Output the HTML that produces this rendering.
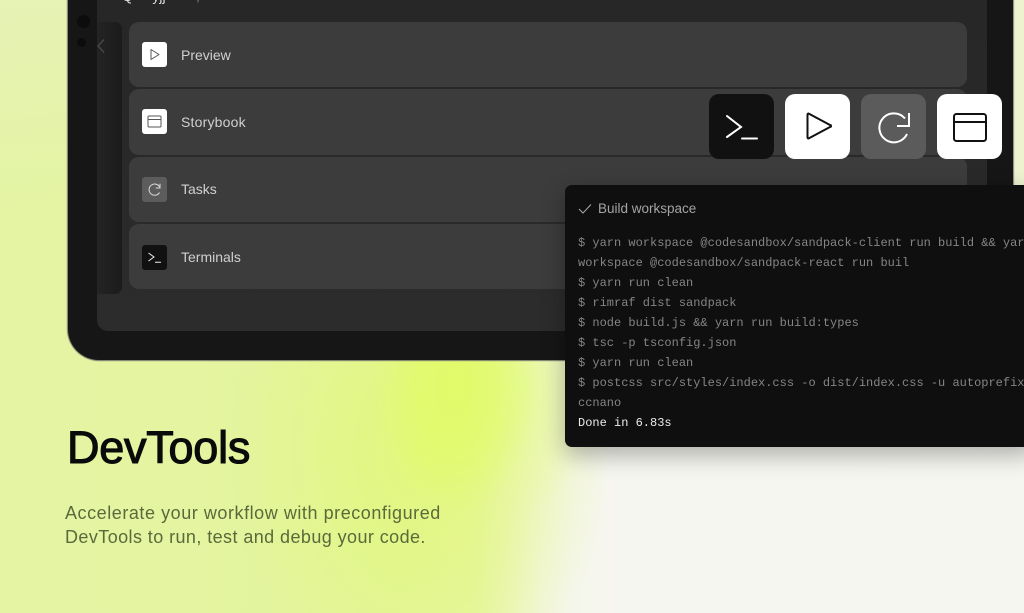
<!DOCTYPE html>
<html><head><meta charset="utf-8">
<style>
*{box-sizing:border-box;margin:0;padding:0}
html,body{width:1024px;height:613px;overflow:hidden}
body{position:relative;font-family:"Liberation Sans",sans-serif;background:#f5f6ee}
.abs{position:absolute}
#bg{left:0;top:0;width:1024px;height:613px;overflow:hidden;background:
radial-gradient(ellipse 80px 130px at 455px 385px,rgba(225,251,105,1) 0%,rgba(225,251,105,.7) 50%,rgba(225,251,105,0) 100%),
radial-gradient(ellipse 190px 260px at 420px 450px,rgba(226,248,120,.85) 0%,rgba(226,248,120,0) 100%),
radial-gradient(ellipse 65px 130px at 525px 385px,rgba(232,250,165,.9) 0%,rgba(232,250,165,0) 100%),
linear-gradient(180deg,rgba(232,241,190,.65) 0%,rgba(232,241,190,0) 35%),
linear-gradient(90deg,#e4f4a3 0,#e3f49c 400px,#e5f5a2 475px,#edf5bf 510px,#f2f5dc 540px,#f5f6ea 570px,#f6f6f0 620px,#f6f6f1 1024px)}
#bg3{left:1012px;top:0;width:12px;height:190px;background:#eef2cf}
#device{left:68px;top:-40px;width:945px;height:400px;background:#161616;border-radius:0 0 31px 31px;box-shadow:0 1px 1px #77776e,-1px 0 1px #77776e,1px 0 1px #8a8a80}
#screen{left:97px;top:-40px;width:890px;height:371px;background:linear-gradient(180deg,#262626,#2c2c2c);border-radius:0 0 11px 11px}
#side{left:97px;top:22px;width:25px;height:272px;background:linear-gradient(90deg,#242424,#1b1b1b);border-radius:0 7px 7px 0}
.row{position:absolute;left:129px;width:838px;height:65px;background:#3c3c3c;border-radius:10px}
.ic{position:absolute;left:142px;width:25px;height:25px;border-radius:3px;display:flex;align-items:center;justify-content:center}
.lb{position:absolute;left:181px;font-size:14px;line-height:18px;color:#d0d0d0}
.big{position:absolute;top:94px;width:65px;height:65px;border-radius:10px}
.big svg,.ic svg{display:block}
#term{left:565px;top:185px;width:470px;height:262px;background:#0f0f10;border-radius:7px;box-shadow:0 8px 24px rgba(0,0,0,.3)}
#term .h{position:absolute;left:33px;top:15px;font-size:13.5px;line-height:18px;color:#a4a4a4}
#term pre{position:absolute;left:13px;top:48px;font-family:"Liberation Mono",monospace;font-size:12px;line-height:20px;color:#858585;white-space:pre}
#term b{font-weight:400;color:#ececec}
h1{position:absolute;left:67px;top:422px;font-size:45px;line-height:52px;font-weight:400;color:#0a0a0a;letter-spacing:-.25px;-webkit-text-stroke:1.1px #0a0a0a;white-space:nowrap}
p{position:absolute;left:65px;top:501px;font-size:18px;line-height:24px;color:#5a6a3a;white-space:nowrap}
</style></head>
<body>
<div class="abs" id="bg"></div>
<div class="abs" id="bg3"></div>
<div class="abs" id="device"></div>
<div class="abs" id="screen"></div>
<div class="abs" style="left:122px;top:-12px;font-size:14px;line-height:16px;color:#ddd;white-space:pre;overflow:hidden">Q     yjj</div>
<div class="abs" style="left:196px;top:-12px;font-size:14px;line-height:16px;color:#777;white-space:pre">,</div>
<div class="abs" style="left:77px;top:15px;width:13px;height:13px;border-radius:50%;background:#0c0c0c"></div>
<div class="abs" style="left:77px;top:38px;width:9px;height:9px;border-radius:50%;background:#0c0c0c"></div>
<div class="abs" id="side"></div>
<svg class="abs" style="left:95px;top:38px" width="12" height="16" viewBox="0 0 12 16" fill="none" stroke="#4a4a4a" stroke-width="1.3"><path d="M9 1.500 3 8l6 6.500"/></svg>

<div class="row" style="top:22px"></div>
<div class="row" style="top:89px;height:66px"></div>
<div class="row" style="top:157px"></div>
<div class="row" style="top:224px"></div>

<div class="ic" style="top:42px;background:#fff"><svg width="15" height="15" viewBox="0 0 15 15" fill="none" stroke="#555" stroke-width="1"><path d="M4 2.500v10l8-5z" stroke-linejoin="round"/></svg></div>
<div class="lb" style="top:46px">Preview</div>
<div class="ic" style="top:109px;background:#fff"><svg width="15" height="15" viewBox="0 0 15 15" fill="none" stroke="#555" stroke-width="1"><rect x="1" y="2" width="13" height="11" rx="1"/><path d="M1 5.500h13"/></svg></div>
<div class="lb" style="top:113px;letter-spacing:.2px">Storybook</div>
<div class="ic" style="top:177px;background:#5c5c5c"><svg width="15" height="15" viewBox="0 0 15 15" fill="none" stroke="#ddd" stroke-width="1"><path d="M12.500 10.500A5.600 5.600 0 1 1 12.600 5M13 1.800V6H8.800"/></svg></div>
<div class="lb" style="top:180px">Tasks</div>
<div class="ic" style="top:245px;background:#111"><svg width="15" height="15" viewBox="0 0 15 15" fill="none" stroke="#eee" stroke-width="1"><path d="M1.500 3 7 7 1.500 11M8 12.200h6"/></svg></div>
<div class="lb" style="top:248px">Terminals</div>

<div class="big" style="left:709px;background:#111"><svg width="65" height="65" viewBox="0 0 65 65" fill="none" stroke="#fff" stroke-width="2" stroke-linecap="round"><path d="M18 22 32 33 18 43M33 44.500h15"/></svg></div>
<div class="big" style="left:785px;background:#fff"><svg width="65" height="65" viewBox="0 0 65 65" fill="none" stroke="#111" stroke-width="2" stroke-linejoin="round"><path d="M22.500 20.500v23a1 1 0 0 0 1.500.8L45 33a1 1 0 0 0 0-2L24 19.700a1 1 0 0 0-1.500.8z"/></svg></div>
<div class="big" style="left:861px;background:#5b5b5b"><svg width="65" height="65" viewBox="0 0 65 65" fill="none" stroke="#fff" stroke-width="2"><path d="M46 40A14.500 14.500 0 1 1 44 24.500M48 19v13H36"/></svg></div>
<div class="big" style="left:937px;background:#fff"><svg width="65" height="65" viewBox="0 0 65 65" fill="none" stroke="#111" stroke-width="2"><rect x="17" y="20" width="32" height="27" rx="2.500"/><path d="M17 28h32"/></svg></div>

<div class="abs" id="term">
<svg class="abs" style="left:13px;top:18px" width="14" height="12" viewBox="0 0 14 12" fill="none" stroke="#a8a8a8" stroke-width="1"><path d="M1 6l4 4 8-8.500"/></svg>
<div class="h">Build workspace</div>
<pre>$ yarn workspace @codesandbox/sandpack-client run build &amp;&amp; yarn
workspace @codesandbox/sandpack-react run buil
$ yarn run clean
$ rimraf dist sandpack
$ node build.js &amp;&amp; yarn run build:types
$ tsc -p tsconfig.json
$ yarn run clean
$ postcss src/styles/index.css -o dist/index.css -u autoprefixer
ccnano
<b>Done in 6.83s</b></pre>
</div>

<h1>DevTools</h1>
<p><span style="letter-spacing:.55px">Accelerate your workflow with preconfigured</span><br><span style="letter-spacing:.42px">DevTools to run, test and debug your code.</span></p>
</body></html>
